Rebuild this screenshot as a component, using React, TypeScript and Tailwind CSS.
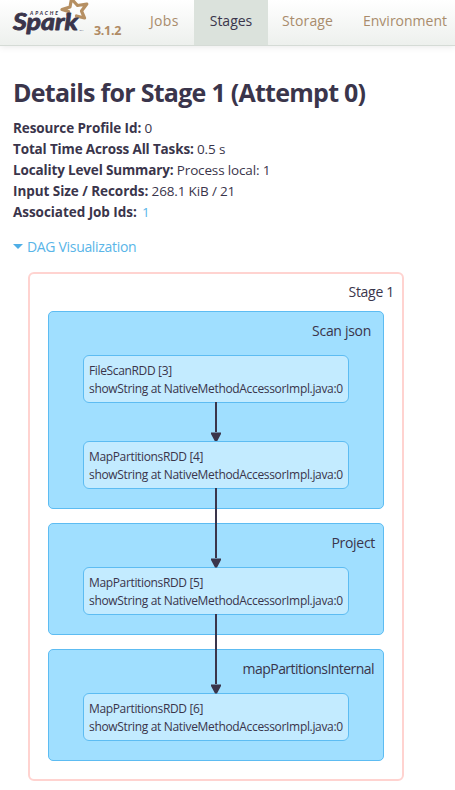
const clusters = [
  { title: "Scan json", box: "h-[198px]", label: "pr-[12px] tracking-[-0.3px]", nodes: ["FileScanRDD [3]", "MapPartitionsRDD [4]"] },
  { title: "Project", box: "h-[112px]", label: "pr-[8px] tracking-[-0.3px]", nodes: ["MapPartitionsRDD [5]"] },
  { title: "mapPartitionsInternal", box: "h-[112px]", label: "pr-[9px] tracking-[-0.55px]", nodes: ["MapPartitionsRDD [6]"] },
];

function Arrow({ place }: { place: string }) {
  return <div className={`absolute left-[127px] flex w-[10px] flex-col items-center ${place}`}>
    <div className="w-[2px] grow bg-[#3a354b]" />
    <svg className="h-[10px] w-[10px] shrink-0" viewBox="0 0 10 10"><path d="M0 0.5H10V2L6 9.5H4L0 2Z" fill="#3a354b" /></svg>
  </div>;
}

function Logo() {
  return <svg className="h-[45px] w-[90px] shrink-0" viewBox="0 0 90 45">
    <path d="M67.5 14.5L68.5 11.5L62 9.5L70 7L71.5-1L77.5 5.5L86.8 4L81.5 11L84.5 18L76.5 16" fill="none" stroke="#b58f62" strokeWidth="3.2" strokeLinejoin="round" strokeLinecap="round" />
    <text x="30" y="14.5" fontFamily="Lato" fontSize="5" fontWeight="900" fontStyle="italic" textLength="28" fill="#3a354b">APACHE</text>
    <text x="13" y="30.3" fontFamily="Lato" fontSize="23.5" fontWeight="700" fontStyle="italic" textLength="65" lengthAdjust="spacingAndGlyphs" fill="#3a354b" stroke="#3a354b" strokeWidth="0.9" strokeLinejoin="round">Spark</text>
    <text x="79.5" y="31" fontFamily="Lato" fontSize="2.5" fill="#3a354b">TM</text>
  </svg>;
}

export default function App() {
  return <div className="h-[790px] w-[455px] overflow-hidden bg-white font-['Open_Sans',sans-serif] text-[14px] leading-[21px] text-[#3a354b]">
    <header className="flex h-[46px] border-b border-[#d5dbd6] bg-linear-to-b from-white to-[#edf0ed] shadow-[0_1px_7px_rgba(0,0,0,0.09)]">
      <Logo />
      <span className="ml-[4px] w-[30px] pt-[20px] text-[12.5px] font-bold tracking-[-0.3px] text-[#b08b64]">3.1.2</span>
      <nav className="ml-[26px] flex whitespace-nowrap leading-[42px] text-[#a98c6c]">
        <span className="w-[44px] tracking-[0.3px]">Jobs</span>
        <span className="h-[45px] w-[74px] bg-[#dbe2dc] text-center text-[#3a354b]">Stages</span>
        <span className="ml-[14px] w-[81px] tracking-[0.15px]">Storage</span>
        <span>Environment</span>
      </nav>
    </header>
    <main>
      <h1 className="ml-[13px] mt-[30px] whitespace-nowrap text-[25px] leading-[32px] font-bold tracking-[-0.73px]">Details for Stage 1 (Attempt 0)</h1>
      <ul className="ml-[13px] mt-[10px] whitespace-nowrap text-[13.5px] tracking-[-0.15px]">
        <li><b className="tracking-[-0.1px]">Resource Profile Id:</b> 0</li>
        <li><b>Total Time Across All Tasks:</b> 0.5 s</li>
        <li><b>Locality Level Summary:</b> Process local: 1</li>
        <li><b className="tracking-[-0.05px]">Input Size / Records:</b> 268.1 KiB / 21</li>
        <li><b className="tracking-[-0.05px]">Associated Job Ids:</b> <span className="ml-[2px] text-[#59b5e8]">1</span></li>
      </ul>
      <div className="ml-[13px] mt-[13px] flex items-center text-[#59b5e8]">
        <svg className="mr-[4px] h-[5px] w-[10px]" viewBox="0 0 10 5"><path d="M0 0H10L5 5Z" fill="#4faee6" /></svg>
        <span className="tracking-[-0.32px]">DAG Visualization</span>
      </div>
      <section className="ml-[28px] mt-[15px] h-[509px] w-[376px] rounded-[6px] border-2 border-[#ffd3d0] px-[18px]">
        <div className="mr-[-10px] h-[37px] pt-[7px] text-right tracking-[-0.3px]">Stage 1</div>
        <div className="flex flex-col gap-[14px]">
          {clusters.map((c) => <div key={c.title} className={`rounded-[5px] border border-[#5dbcf2] bg-[#a0dfff] ${c.box}`}>
            <div className={`h-[43px] pt-[8px] text-right ${c.label}`}>{c.title}</div>
            <div className="ml-[34px] flex flex-col gap-[38px]">
              {c.nodes.map((n) => <div key={n} className="relative h-[48px] w-[266px] rounded-[6px] border border-[#5dbcf2] bg-[#c3ebff] pt-[6px] pl-[5px] text-[12px] leading-[18px] whitespace-nowrap">
                <div className="tracking-[-0.35px]">{n}</div>
                <div className="tracking-[-0.33px]">showString at NativeMethodAccessorImpl.java:0</div>
                {n.endsWith("[3]") && <Arrow place="top-[46px] h-[40px]" />}
                {(n.endsWith("[4]") || n.endsWith("[5]")) && <Arrow place="top-[46px] z-10 h-[80px]" />}
              </div>)}
            </div>
          </div>)}
        </div>
      </section>
    </main>
  </div>;
}
